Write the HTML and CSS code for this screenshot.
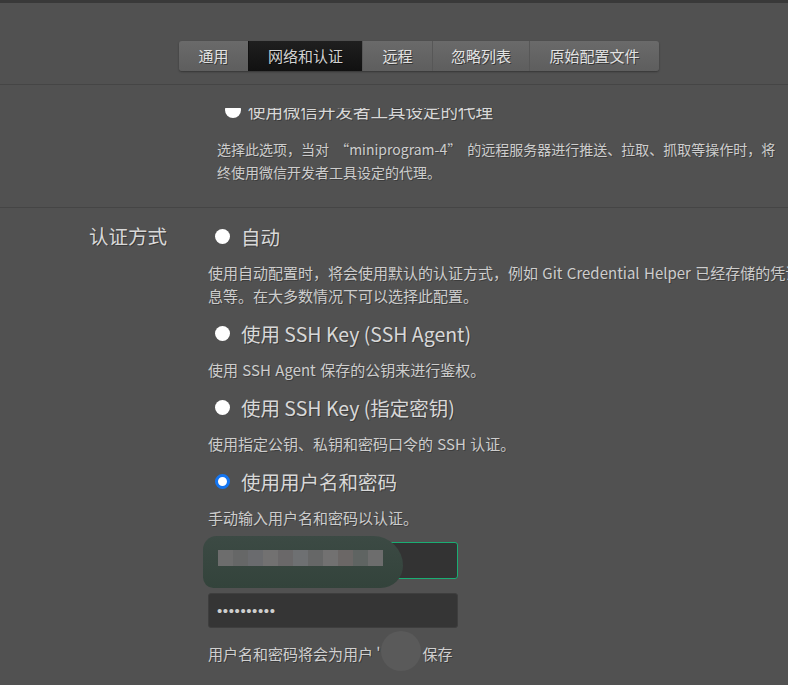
FILE: index.html
```html
<!DOCTYPE html>
<html lang="zh-CN">
<head>
    <meta charset="UTF-8">
    <meta name="viewport" content="width=device-width, initial-scale=1.0">
    <title>网络和认证</title>
    <link rel="stylesheet" href="styles.css">
</head>
<body>
    <div class="topline"></div>

    <div class="head">
        <nav class="tabs">
            <div class="tab w1">通用</div>
            <div class="tab w2 active">网络和认证</div>
            <div class="tab w3">远程</div>
            <div class="tab w4">忽略列表</div>
            <div class="tab w5">原始配置文件</div>
        </nav>
    </div>

    <div class="pane">
        <!-- proxy section, scrolled half out of view -->
        <div class="proxy">
            <label class="opt">
                <input type="radio" name="proxy">
                <span>使用微信开发者工具设定的代理</span>
            </label>
            <p class="desc">选择此选项，当对 “miniprogram-4” 的远程服务器进行推送、拉取、抓取等操作时，将<br>终使用微信开发者工具设定的代理。</p>
        </div>

        <div class="auth">
            <div class="title">认证方式</div>
            <div class="choices">
                <label class="opt">
                    <input type="radio" name="auth">
                    <span>自动</span>
                </label>
                <p class="desc">使用自动配置时，将会使用默认的认证方式，例如 Git Credential Helper 已经存储的凭证信<br>息等。在大多数情况下可以选择此配置。</p>

                <label class="opt">
                    <input type="radio" name="auth">
                    <span>使用 SSH Key (SSH Agent)</span>
                </label>
                <p class="desc">使用 SSH Agent 保存的公钥来进行鉴权。</p>

                <label class="opt">
                    <input type="radio" name="auth">
                    <span>使用 SSH Key (指定密钥)</span>
                </label>
                <p class="desc">使用指定公钥、私钥和密码口令的 SSH 认证。</p>

                <label class="opt">
                    <input type="radio" name="auth" checked>
                    <span>使用用户名和密码</span>
                </label>
                <p class="desc">手动输入用户名和密码以认证。</p>

                <div class="field">
                    <input class="input focus" type="text">
                    <div class="smear">
                        <div class="pix">
                            <i class="p1"></i><i class="p2"></i><i class="p3"></i><i class="p4"></i><i class="p5"></i><i class="p6"></i><i class="p2"></i><i class="p4"></i><i class="p7"></i><i class="p8"></i><i class="p1"></i>
                        </div>
                    </div>
                </div>
                <div class="field">
                    <input class="input secret" type="password" value="abcdefghij" readonly>
                </div>

                <p class="foot">用户名和密码将会为用户 '<span class="mask"></span>保存</p>
            </div>
        </div>
    </div>
</body>
</html>
```

FILE: styles.css
```css
body {
    margin: 0;
    height: 685px;
    overflow: hidden;
    background-color: #515151;
    color: #d8d8d8;
    font-family: "Noto Sans CJK SC", "Noto Sans", sans-serif;
}
.topline {
    height: 3px;
    background-color: #393939;
}
.head {
    box-sizing: border-box;
    height: 82px;
    padding-top: 38px;
    border-bottom: 1px solid #454545;
}
.tabs {
    display: flex;
    width: max-content;
    margin-left: 179px;
    border-radius: 3px;
    overflow: hidden;
    box-shadow: 0 1px 2px rgba(0, 0, 0, 0.35);
}
.tab {
    height: 30px;
    line-height: 30px;
    font-size: 15px;
    text-align: center;
    color: #e2e2e2;
    text-shadow: 1px 1px 0 rgba(0, 0, 0, 0.45);
    background: linear-gradient(#6a6a6a, #5e5e5e);
    border-left: 1px solid #575757;
}
.tab:first-child {
    border-left: 0;
}
.tab.active {
    color: #d2d2d2;
    background: linear-gradient(#1f1f1f, #111);
    border-left-color: #111;
}
.w1 { width: 69px; }
.w2 { width: 113px; }
.w3 { width: 69px; }
.w4 { width: 96px; }
.w5 { width: 129px; }

.pane {
    margin-top: 23px;
    height: 577px;
    overflow: hidden;
    white-space: nowrap;
}
.opt {
    display: flex;
    align-items: center;
    height: 26px;
    text-shadow: 1px 1px 0 rgba(0, 0, 0, 0.3);
}
.opt input {
    appearance: none;
    flex: none;
    box-sizing: border-box;
    width: 15px;
    height: 15px;
    margin: 0;
    border-radius: 50%;
    background-color: #fff;
}
.opt input:checked {
    border: 3.5px solid #1475f0;
}
.desc {
    margin: 12px 0 13px;
    font-size: 15px;
    line-height: 23px;
    word-spacing: 1px;
    color: #cdcdcd;
    text-shadow: 1px 1px 0 rgba(0, 0, 0, 0.25);
}

.proxy {
    padding: 0 0 23px 217px;
    border-bottom: 1px solid #454545;
}
.proxy .opt {
    margin-top: -11px;
    padding-left: 8px;
    gap: 7px;
    font-size: 17.5px;
}
.proxy .opt input {
    width: 16px;
    height: 16px;
}
.proxy .desc {
    margin: 15px 0 0;
    font-size: 14px;
    word-spacing: 3px;
}

.auth {
    display: flex;
    padding: 15px 0 0 89px;
}
.title {
    flex: none;
    width: 119px;
    height: 26px;
    line-height: 26px;
    font-size: 19.5px;
    text-shadow: 1px 1px 0 rgba(0, 0, 0, 0.3);
}
.auth .opt {
    padding-left: 7px;
    gap: 11px;
    font-size: 19.5px;
}
.auth .desc:last-of-type {
    margin-bottom: 10px;
}

.field {
    position: relative;
    width: 250px;
    margin-bottom: 14px;
}
.input {
    display: block;
    box-sizing: border-box;
    width: 250px;
    height: 35px;
    padding: 0 8px;
    border: 1px solid #3e3e3e;
    border-radius: 3px;
    background-color: #353535;
    color: #cfcfcf;
    font-size: 12px;
    outline: none;
}
.input.secret {
    font-size: 15px;
    letter-spacing: 0.6px;
}
.input.focus {
    height: 37px;
    border-color: #1aad73;
    background-color: #333;
}
.smear {
    position: absolute;
    left: -5px;
    top: -6px;
    width: 200px;
    height: 52px;
    border-radius: 18px 40px 30px 14px;
    background: linear-gradient(#3c4a44, #33433b);
}
.pix {
    display: flex;
    margin: 14px 0 0 15px;
}
.pix i {
    width: 15px;
    height: 16px;
}
.p1 { background-color: #6d6d6d; }
.p2 { background-color: #666767; }
.p3 { background-color: #6a6b6e; }
.p4 { background-color: #727171; }
.p5 { background-color: #6a6869; }
.p6 { background-color: #6e7072; }
.p7 { background-color: #6b6766; }
.p8 { background-color: #5f6462; }

.foot {
    margin: 0;
    font-size: 15px;
    line-height: 23px;
    color: #d0d0d0;
    text-shadow: 1px 1px 0 rgba(0, 0, 0, 0.3);
}
.mask {
    position: relative;
    display: inline-block;
    width: 42px;
    height: 1px;
}
.mask::after {
    content: "";
    position: absolute;
    left: 0;
    top: -28px;
    width: 40px;
    height: 40px;
    border-radius: 50%;
    background-color: #5a5a5a;
}
```
